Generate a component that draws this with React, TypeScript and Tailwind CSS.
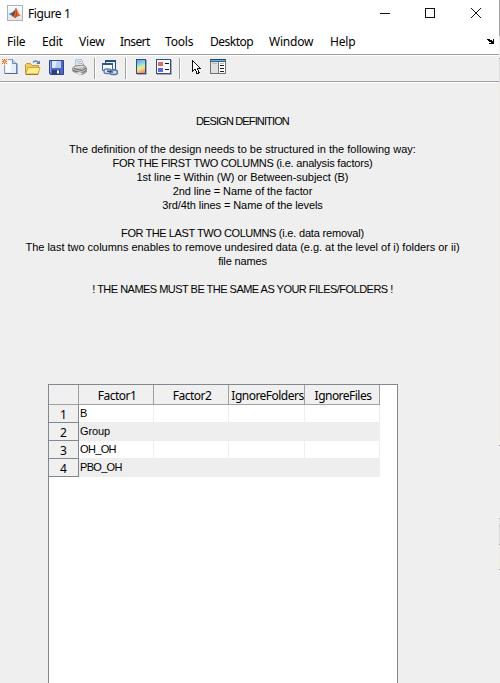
import React from "react";

const menus = [
  { label: "File", cls: "w-[35px] tracking-[-0.2px]" },
  { label: "Edit", cls: "w-[37px] tracking-[-0.2px]" },
  { label: "View", cls: "w-[41px] tracking-[-0.2px]" },
  { label: "Insert", cls: "w-[45px] tracking-[-0.6px]" },
  { label: "Tools", cls: "w-[45px] tracking-[-0.2px]" },
  { label: "Desktop", cls: "w-[59px] tracking-[-0.5px]" },
  { label: "Window", cls: "w-[61px] tracking-[-0.2px]" },
  { label: "Help", cls: "w-[40px] tracking-[-0.2px]" },
];

const lines = [
  { text: "DESIGN DEFINITION", cls: "tracking-[-0.86px]", tail: "", tailCls: "" },
  { text: "", cls: "", tail: "", tailCls: "" },
  { text: "The definition of the design needs to be structured in the following way:", cls: "tracking-[0.01px]", tail: "", tailCls: "" },
  { text: "FOR THE FIRST TWO COLUMNS ", cls: "tracking-[-0.34px]", tail: "(i.e. analysis factors)", tailCls: "tracking-[-0.2px]" },
  { text: "1st line = Within (W) or Between-subject (B)", cls: "tracking-[-0.04px]", tail: "", tailCls: "" },
  { text: "2nd line = Name of the factor", cls: "tracking-[-0.07px]", tail: "", tailCls: "" },
  { text: "3rd/4th lines = Name of the levels", cls: "tracking-[-0.09px]", tail: "", tailCls: "" },
  { text: "", cls: "", tail: "", tailCls: "" },
  { text: "FOR THE LAST TWO COLUMNS ", cls: "tracking-[-0.42px]", tail: "(i.e. data removal)", tailCls: "tracking-[-0.18px]" },
  { text: "The last two columns enables to remove undesired data (e.g. at the level of i) folders or ii)", cls: "tracking-[-0.02px]", tail: "", tailCls: "" },
  { text: "file names", cls: "tracking-[-0.15px]", tail: "", tailCls: "" },
  { text: "", cls: "", tail: "", tailCls: "" },
  { text: "! THE NAMES MUST BE THE SAME AS YOUR FILES/FOLDERS !", cls: "tracking-[-0.52px]", tail: "", tailCls: "" },
];

const headers = [
  { label: "Factor1", cls: "w-[75px]" },
  { label: "Factor2", cls: "w-[75px]" },
  { label: "IgnoreFolders", cls: "w-[76px]" },
  { label: "IgnoreFiles", cls: "w-[75px]" },
];

const rows = [
  { value: "B", cls: "" },
  { value: "Group", cls: "tracking-[-0.1px]" },
  { value: "OH_OH", cls: "tracking-[-0.65px]" },
  { value: "PBO_OH", cls: "tracking-[-0.7px]" },
];

function Icon({ children, className = "" }: { children: React.ReactNode; className?: string }) {
  return (
    <svg width="18" height="18" viewBox="0 0 18 18" className={`shrink-0 ${className}`}>
      {children}
    </svg>
  );
}

function MatlabIcon() {
  return (
    <svg width="16" height="16" viewBox="0 0 16 16" className="shrink-0">
      <defs>
        <linearGradient id="app" x2="0" y2="1">
          <stop stopColor="#fdfdfd" />
          <stop offset="1" stopColor="#dfe5ec" />
        </linearGradient>
      </defs>
      <rect x="0.5" y="0.5" width="15" height="15" fill="url(#app)" stroke="#a9b3bd" />
      <path d="M1.500 9l3.500-1.600L7.600 5l1.200-2L8 9l-2 3-1.500-1.500z" fill="#3f7fb5" />
      <path d="M5 9l3-3 .8-3L8.600 9 6.500 12z" fill="#713425" />
      <path d="M8.800 2.500c1.500 1.500 2.500 6 5.200 8.800-1.500-.7-2.800-.2-3.900.8-1 .8-2 1.400-2.800 1L6 11.500C7.800 10 8 5 8.800 2.500z" fill="#df6a26" />
      <path d="M9 3l.3 6-1.800 4L10 10z" fill="#a63221" />
    </svg>
  );
}

function NewIcon() {
  return (
    <Icon>
      <path d="M3.500 1.500h8l4 4v10h-12z" fill="#e4effa" stroke="#8ba0c4" />
      <path d="M5 3h5v11H5z" fill="#f8fcff" />
      <path d="M11.500 1.500v4h4" fill="#bed3ec" stroke="#6d86ad" />
      <path d="M4 15.500h12.500M16 5.500V16" stroke="#4e6a9d" />
      <rect x="0" y="0" width="7" height="7" fill="#fbeee4" fillOpacity=".8" />
      <path d="M3.500 1v5M1 3.500h5M1 1l1 1M5 1l1 1M1 6l1-1M5 5l1 1" stroke="#e3722f" />
      <rect x="2.500" y="2.500" width="2" height="2" fill="#ffe174" stroke="#e3722f" strokeWidth=".7" />
    </Icon>
  );
}

function OpenIcon() {
  return (
    <Icon>
      <path d="M1.500 16V6.500l1-1h4l1.500 2h6.500V16z" fill="#f2cb58" stroke="#c2973a" />
      <path d="M1.500 16l2.500-6.500h12L14 16z" fill="#ffef8e" stroke="#cda042" />
      <path d="M2 16.500h12" stroke="#a67616" />
      <path d="M9 4.500c1-2 4-2 5.500 0" fill="none" stroke="#557ea9" strokeWidth="1.300" />
      <path d="M12 6h4V2.500z" fill="#557ea9" />
    </Icon>
  );
}

function SaveIcon() {
  return (
    <Icon>
      <path d="M1.500 2.500h14v14h-13l-1-1z" fill="#5266c5" stroke="#34438f" />
      <path d="M2.500 3.500v11" stroke="#8ba0ea" />
      <rect x="4" y="3" width="9" height="7" fill="#dceafb" />
      <path d="M9 3h4v7H7z" fill="#b5ccef" />
      <rect x="4" y="12" width="8" height="4.500" fill="#303d72" />
      <rect x="9" y="12.500" width="2" height="3" fill="#fff" />
    </Icon>
  );
}

function PrintIcon() {
  return (
    <Icon>
      <path d="M5 9L4.500 2l6-.5L13 8z" fill="#eff7ff" stroke="#a8b5c3" />
      <path d="M6 4l4-.5M6.500 6l4.500-.5" stroke="#9daebe" />
      <path d="M1.500 10L4 8l9-1 2.500 3v4l-4 2.500L2 13.500z" fill="#bdbdbd" stroke="#8d8d8d" />
      <path d="M3 10.500l8 2 4-2.500M2 12.500l9 2.500 4-2.500" fill="none" stroke="#686868" />
      <path d="M4 14.500l5-.5 3 1.500-3 1.500z" fill="#f4f5f7" stroke="#aaa" strokeWidth=".7" />
      <path d="M4 9.500l8-1" stroke="#eee" />
    </Icon>
  );
}

function LinkIcon() {
  return (
    <Icon>
      <path d="M4.500 2.500h10v9h-10z" fill="#e7f1fc" stroke="#294b7b" />
      <path d="M4 3h11" stroke="#294b7b" strokeWidth="2" />
      <path d="M1.500 5.500h10v7h-10z" fill="#f7fbff" stroke="#426797" />
      <path d="M1 6h11" stroke="#315789" strokeWidth="2" />
      <rect x="3" y="11" width="7" height="4.500" rx="2.200" fill="#e1edf9" stroke="#6681a5" strokeWidth="1.400" />
      <rect x="9" y="12" width="7.500" height="4.500" rx="2.200" fill="#cbddec" stroke="#53759f" strokeWidth="1.400" />
      <path d="M6 13l6 1.200" stroke="#294b7b" strokeWidth="1.300" />
    </Icon>
  );
}

function ColorbarIcon() {
  return (
    <Icon>
      <defs>
        <linearGradient id="bar" x1="0" x2="0.25" y1="0" y2="1">
          <stop stopColor="#9f83e9" />
          <stop offset=".3" stopColor="#78c6f0" />
          <stop offset=".55" stopColor="#b9efb1" />
          <stop offset=".75" stopColor="#ffe178" />
          <stop offset="1" stopColor="#f19375" />
        </linearGradient>
      </defs>
      <rect x="4.500" y="1.500" width="9" height="14" fill="url(#bar)" stroke="#304b7d" />
      <path d="M14.500 2v14.500H5" fill="none" stroke="#a5adba" />
    </Icon>
  );
}

function LegendIcon() {
  return (
    <Icon>
      <rect x="1.500" y="1.500" width="14" height="14" fill="#f9fbff" stroke="#304b7d" />
      <path d="M16.500 2v14.500H2" fill="none" stroke="#a5adba" />
      <rect x="3" y="4" width="5" height="4" fill="#e16666" />
      <rect x="3" y="10" width="5" height="4" fill="#6666e5" />
      <path d="M10 5.500h4M10 11.500h4" stroke="#111" />
    </Icon>
  );
}

function PointerIcon() {
  return (
    <Icon>
      <path d="M5.500 2.500v11l2.500-2.500 2.200 5 2-1-2-4.500h3.300z" fill="white" stroke="#111" shapeRendering="crispEdges" />
    </Icon>
  );
}

function InspectorIcon() {
  return (
    <Icon>
      <rect x="1.500" y="1.500" width="15" height="14" fill="#fff" stroke="#727272" />
      <rect x="2" y="4" width="7" height="11" fill="#e0e0e0" />
      <path d="M1 1.500h16" stroke="#1d4867" />
      <path d="M2 2.500h14" stroke="#73b2dc" />
      <path d="M1 3.500h16" stroke="#386783" />
      <path d="M9.500 4v11" stroke="#777" />
      <path d="M3 5.500h5M11 5.500h4" stroke="#bbb" />
      <path d="M11 7.500h4M11 10.500h4M11 13.500h4" stroke="#222" />
    </Icon>
  );
}

function Separator({ className }: { className: string }) {
  return <div className={`h-[21px] w-[2px] shrink-0 border-l border-l-[#a0a0a0] border-r border-r-white ${className}`} />;
}

export default function App() {
  return (
    <div className="flex h-[683px] w-[500px] overflow-hidden bg-[#efefef] text-black">
      <main className="flex w-[499px] shrink-0 flex-col font-['Liberation_Sans',sans-serif] text-[11px]">
        <header className="flex h-[28px] shrink-0 items-start bg-white pl-[7px] pt-[5px] font-['Noto_Sans',sans-serif] text-[12px]">
          <MatlabIcon />
          <span className="ml-[5px] mt-[1px] leading-[16px] tracking-[-0.4px]">Figure 1</span>
          <svg width="110" height="16" viewBox="0 0 110 16" className="ml-auto mr-[12px] shrink-0" fill="none" stroke="#111">
            <path d="M3 8.500h10M48.500 3.500h9v9h-9z" shapeRendering="crispEdges" />
            <path d="M94 3l10 10M104 3L94 13" />
          </svg>
        </header>
        <nav className="flex h-[26px] shrink-0 items-center bg-white pl-[7px] pt-px font-['Noto_Sans',sans-serif] text-[12px]">
          {menus.map((m) => (
            <span key={m.label} className={`shrink-0 whitespace-nowrap leading-[16px] ${m.cls}`}>{m.label}</span>
          ))}
          <svg width="7" height="5" viewBox="0 0 7 5" className="mb-px ml-auto mr-[5px]" shapeRendering="crispEdges">
            <path d="M0 0h3v1h2v1h1V0h1v5H2V4h2V3H2V2H1V1H0z" fill="#000" />
          </svg>
        </nav>
        <div className="flex h-[28px] shrink-0 items-start border-y border-y-[#a0a0a0] pt-[3px] shadow-[inset_0_1px_#fff,0_1px_#fff]">
          <div className="flex items-start pl-[1px]">
            <NewIcon />
            <div className="ml-[5px]"><OpenIcon /></div>
            <div className="ml-[6px]"><SaveIcon /></div>
            <div className="ml-[5px]"><PrintIcon /></div>
            <Separator className="ml-[5px]" />
            <div className="ml-[5px]"><LinkIcon /></div>
            <Separator className="ml-[6px]" />
            <div className="ml-[5px]"><ColorbarIcon /></div>
            <div className="ml-[5px]"><LegendIcon /></div>
            <Separator className="ml-[6px]" />
            <div className="ml-[6px]"><PointerIcon /></div>
            <div className="ml-[4px]"><InspectorIcon /></div>
          </div>
        </div>
        <section className="mt-[32px] flex h-[182px] w-[485px] shrink-0 flex-col items-center">
          {lines.map((l, i) => (
            <p key={i} className="h-[14px] whitespace-pre leading-[14px]">
              <span className={l.cls}>{l.text}</span>
              {l.tail && <span className={l.tailCls}>{l.tail}</span>}
            </p>
          ))}
        </section>
        <section className="ml-[48px] mt-[88px] w-[350px] flex-1 border border-b-0 border-[#828790] bg-white">
          <div className="flex h-[20px] w-[331px] border-b border-[#a0a0a0] bg-[#f0f0f0] font-['Noto_Sans',sans-serif] text-[12px] tracking-[-0.52px]">
            <div className="w-[30px] shrink-0 border-r border-[#a0a0a0]" />
            {headers.map((h) => (
              <div key={h.label} className={`flex shrink-0 items-center justify-center whitespace-nowrap border-r border-[#a0a0a0] pl-[2px] pt-[3px] ${h.cls}`}>{h.label}</div>
            ))}
          </div>
          {rows.map((r, i) => (
            <div key={r.value} className="flex h-[18px] w-[331px]">
              <div className="flex w-[30px] shrink-0 items-center justify-center border-b border-r border-[#828790] bg-[#f0f0f0] pt-[2px] font-['Noto_Sans',sans-serif] text-[12px]">{i + 1}</div>
              {headers.map((h, j) => (
                <div key={h.label} className={`shrink-0 border-b border-r border-[#eee] pl-[1px] leading-[16px] ${r.cls} ${i % 2 ? "bg-[#eee]" : "bg-white"} ${h.cls}`}>{j === 0 ? r.value : ""}</div>
              ))}
            </div>
          ))}
        </section>
      </main>
      <aside className="flex w-px shrink-0 flex-col">
        <div className="h-[36px] bg-[#a0a0a0]" />
        <div className="h-[22px] bg-[#eee]" />
        <div className="h-px bg-[#999]" />
        <div className="h-[24px] bg-[#ddd]" />
        <div className="h-[362px] bg-[#eeeedb]" />
        <div className="h-px bg-[#999]" />
        <div className="h-[72px] bg-[#efefef]" />
        <div className="h-px bg-[#bbb]" />
        <div className="h-[6px] bg-[#e5e5e5]" />
        <div className="h-px bg-[#bbb]" />
        <div className="h-[18px] bg-[#d8d8d8]" />
        <div className="h-px bg-[#999]" />
        <div className="h-[24px] bg-[#eeeedb]" />
        <div className="h-px bg-[#999]" />
        <div className="flex-1 bg-[#efefef]" />
      </aside>
    </div>
  );
}
